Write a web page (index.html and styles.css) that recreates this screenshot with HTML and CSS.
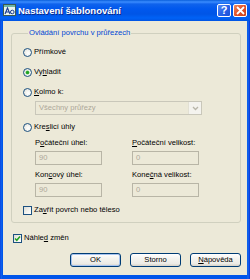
FILE: index.html
```html
<!DOCTYPE html>
<html lang="cs">
<head>
<meta charset="utf-8">
<link rel="stylesheet" href="styles.css">
</head>
<body>
<div class="window">
  <div class="titlebar">
    <svg class="app-icon" width="13" height="12" viewBox="0 0 13 12">
      <rect x="0.5" y="0.5" width="12" height="11" fill="#e8f4f0" stroke="#3a5a50"/>
      <rect x="1" y="1" width="11" height="2" fill="#6fb7a8"/>
      <path d="M2 10 L4.5 4 L7 10 M3 8 L6 8" stroke="#1a3a90" stroke-width="1.1" fill="none"/>
      <circle cx="9.3" cy="8" r="1.8" stroke="#1a3a90" stroke-width="1" fill="none"/>
    </svg>
    <span class="title">Nastavení šablonování</span>
    <span class="spacer"></span>
    <span class="cap-btn help">?</span>
    <span class="cap-btn close">
      <svg width="9" height="9" viewBox="0 0 9 9"><path d="M1 1 L8 8 M8 1 L1 8" stroke="#fff" stroke-width="1.8"/></svg>
    </span>
  </div>
  <div class="client">
    <div class="group">
      <div class="legend">Ovládání povrchu v průřezech</div>
      <div class="row r1"><span class="radio"></span><span>Přímkové</span></div>
      <div class="row r2"><span class="radio checked"></span><span>Vy<u>h</u>ladit</span></div>
      <div class="row r2"><span class="radio"></span><span><u>K</u>olmo k:</span></div>
      <div class="select">
        <span class="select-text">Všechny průřezy</span>
        <span class="select-btn">
          <svg width="7" height="5" viewBox="0 0 7 5"><path d="M1 1 L3.5 3.5 L6 1" stroke="#b8b5a8" stroke-width="1.3" fill="none"/></svg>
        </span>
      </div>
      <div class="row r3"><span class="radio"></span><span>Kre<u>s</u>licí úhly</span></div>
      <div class="fields">
        <div class="field">
          <div class="flabel">P<u>o</u>čáteční úhel:</div>
          <div class="input">90</div>
        </div>
        <div class="field">
          <div class="flabel"><u>P</u>očáteční velikost:</div>
          <div class="input">0</div>
        </div>
        <div class="field">
          <div class="flabel">Kon<u>c</u>ový úhel:</div>
          <div class="input">90</div>
        </div>
        <div class="field">
          <div class="flabel">Kone<u>č</u>ná velikost:</div>
          <div class="input">0</div>
        </div>
      </div>
      <div class="row r4"><span class="check"></span><span>Za<u>v</u>řít povrch nebo těleso</span></div>
    </div>
    <div class="row preview"><span class="check checked">
      <svg width="7" height="7" viewBox="0 0 7 7"><path d="M1 3.5 L2.8 5.3 L6 1.5" stroke="#21a121" stroke-width="1.5" fill="none"/></svg>
    </span><span>Náhle<u>d</u> změn</span></div>
    <div class="buttons">
      <span class="btn default">OK</span>
      <span class="btn">Storno</span>
      <span class="btn"><u>N</u>ápověda</span>
    </div>
  </div>
</div>
</body>
</html>
```
FILE: styles.css
```css
html, body {
  margin: 0;
  padding: 0;
}
body {
  font-family: "Liberation Sans", Arial, sans-serif;
  font-size: 7.6px;
  color: #000;
  background: #0054e3;
}
.window {
  width: 250px;
  height: 279px;
  display: flex;
  flex-direction: column;
  background: linear-gradient(to right, #0831d9 0, #166aee 1px, #0055ea 2px, #0055ea 247px, #166aee 248px, #0831d9 250px);
  box-sizing: border-box;
}
.titlebar {
  height: 21px;
  display: flex;
  align-items: center;
  padding: 0 3px 0 3px;
  background: linear-gradient(to bottom, #0a5fdc 0, #3a8cff 2px, #0f63ec 4px, #0058ee 9px, #0055e6 14px, #0062f6 18px, #0054e3 21px);
  box-sizing: border-box;
}
.app-icon {
  flex: none;
  margin-top: -1px;
}
.title {
  margin-left: 2px;
  color: #fff;
  font-weight: bold;
  font-size: 9.5px;
  text-shadow: 1px 1px 0 #0a2a8a;
}
.spacer {
  flex: 1;
}
.cap-btn {
  width: 14px;
  height: 13px;
  box-sizing: border-box;
  border: 1px solid #fff;
  border-radius: 2px;
  display: flex;
  align-items: center;
  justify-content: center;
  color: #fff;
  font-weight: bold;
  font-size: 11px;
  line-height: 1;
  margin-top: -1px;
}
.help {
  background: linear-gradient(135deg, #5b8ff5 0, #2a63e8 50%, #1b4fd6 100%);
  margin-right: 2px;
}
.close {
  background: linear-gradient(135deg, #ee8a60 0, #e0522a 50%, #c8401c 100%);
}
.client {
  flex: 1;
  margin: 0 3px 4px 3px;
  background: #ece9d8;
  padding: 12px 6px 0 8px;
  display: flex;
  flex-direction: column;
}
.group {
  border: 1px solid #d0d0bf;
  border-radius: 3px;
  padding: 0 0 6px 11px;
}
.legend {
  width: max-content;
  margin: -7px 0 0 5px;
  padding: 0 1px;
  background: #ece9d8;
  color: #0046d5;
  line-height: 12px;
}
.row {
  display: flex;
  align-items: center;
  height: 12px;
  line-height: 12px;
  gap: 2px;
  white-space: nowrap;
}
.r1 { margin-top: 7px; }
.r2 { margin-top: 8px; }
.r3 { margin-top: 6px; }
.r4 { margin-top: 7px; }
.radio {
  width: 9px;
  height: 9px;
  box-sizing: border-box;
  border: 1px solid #1c5180;
  border-radius: 50%;
  background: radial-gradient(circle at 60% 60%, #ffffff 0, #f4f4f0 40%, #dcdcd5 100%);
  display: flex;
  align-items: center;
  justify-content: center;
  flex: none;
}
.radio.checked::after {
  content: "";
  width: 3px;
  height: 3px;
  border-radius: 50%;
  background: #21a121;
  box-shadow: 0 0 0 0.5px #5ec85e;
}
.check {
  width: 9px;
  height: 9px;
  box-sizing: border-box;
  border: 1px solid #1c5180;
  background: linear-gradient(135deg, #dcdcd5 0, #f4f4f0 60%, #ffffff 100%);
  display: flex;
  align-items: center;
  justify-content: center;
  flex: none;
}
u {
  text-decoration: underline;
  text-underline-offset: 1px;
}
.select {
  margin: 3px 0 0 12px;
  width: 167px;
  height: 14px;
  box-sizing: border-box;
  border: 1px solid #c9c7ba;
  background: #ece9d8;
  display: flex;
  align-items: stretch;
}
.select-text {
  flex: 1;
  color: #aca899;
  padding-left: 3px;
  line-height: 12px;
}
.select-btn {
  width: 12px;
  background: #f4f3ee;
  border-left: 1px solid #e2e0d4;
  display: flex;
  align-items: center;
  justify-content: center;
}
.fields {
  display: grid;
  grid-template-columns: 97px 67px;
  row-gap: 4px;
  margin: 4px 0 0 12px;
}
.flabel {
  line-height: 12px;
  height: 12px;
  margin-bottom: 2px;
  white-space: nowrap;
}
.input {
  width: 67px;
  height: 14px;
  box-sizing: border-box;
  border: 1px solid #b8b5a6;
  background: #ece9d8;
  color: #aca899;
  padding-left: 3px;
  line-height: 12px;
}
.preview {
  margin: 9px 0 0 2px;
}
.buttons {
  display: flex;
  justify-content: flex-end;
  gap: 9px;
  margin-top: 9px;
}
.btn {
  width: 51px;
  height: 14px;
  box-sizing: border-box;
  border: 1px solid #003c74;
  border-radius: 3px;
  background: linear-gradient(to bottom, #ffffff 0, #f4f3ee 40%, #ecebe6 80%, #d6d0c5 100%);
  display: flex;
  align-items: center;
  justify-content: center;
  line-height: 12px;
}
.btn.default {
  box-shadow: inset 0 0 0 1px #a8c4f0;
}
```
